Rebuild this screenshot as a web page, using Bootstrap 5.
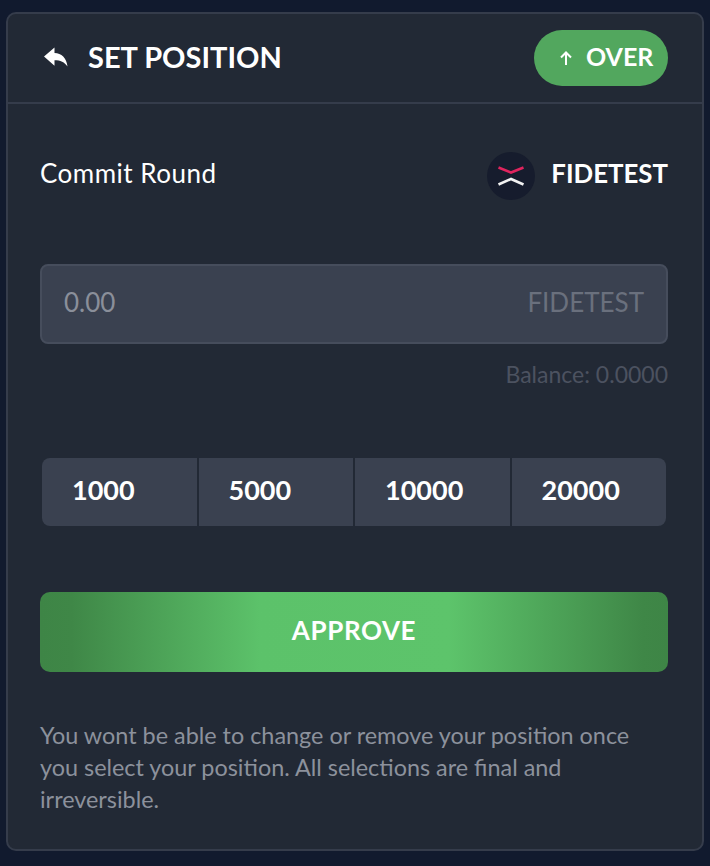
<!DOCTYPE html>
<html lang="en">
<head>
<meta charset="utf-8">
<title>Set Position</title>
<link rel="stylesheet" href="https://cdn.jsdelivr.net/npm/bootstrap@5.3.0/dist/css/bootstrap.min.css">
<style>
html,body{height:100%}
body{background:#111a2e;font-family:"Lato","Liberation Sans",sans-serif;color:#fff;padding:12px 6px 15px;overflow:hidden}
.pos-card{height:839px;width:698px;background:#222935;border:2px solid #353c4b;border-radius:10px;color:#fff}
.pos-head{height:90px;background:transparent;border-bottom:2px solid #353c4b;border-radius:0!important;padding:0 34px 0 36px}
.pos-title{font-size:29px;font-weight:700;line-height:1;margin:0;padding-bottom:3px}
.pos-back{width:24px;height:22px;margin-right:20px;margin-bottom:2px;flex:none}
.pos-pill{width:134px;height:56px;background:#52a75e;font-size:25px;font-weight:700;color:#fff;gap:13px;border:0;padding:0 0 0 25px}
.pos-pill span{padding-bottom:3px}
.pos-arrow{width:14px;height:14px}
.pos-body{padding:47px 34px 0 32px}
.pos-round{height:50px;font-size:26px;letter-spacing:.5px}
.pos-label{padding-bottom:5px}
.pos-coin{width:48px;height:48px;background:#161c2d;margin-right:16px}
.pos-token{font-size:25.8px;font-weight:700;letter-spacing:0;padding-bottom:5px}
.pos-input{margin-top:63px;height:80px;background:#3a4150;border:2px solid #464d5c;border-radius:8px}
.pos-input .form-control{background:transparent;border:0;box-shadow:none;color:#fff;font-size:26px;padding:0 0 4px 22px;height:76px;font-family:inherit}
.pos-input .form-control::placeholder{color:#8a8f9a;opacity:1}
.pos-input .input-group-text{background:transparent;border:0;color:#6a707d;font-size:26px;padding:0 22px 4px 0}
.pos-bal{margin-top:14px;height:32px;line-height:32px;font-size:23px;color:#4c5260;text-align:right}
.pos-amts{margin:68px 2px 0;height:68px;display:flex;background:#222935;border:0}
.pos-amts .btn{flex:1 1 0;background:#3a4150;border:0;border-radius:0;color:#fff;font-size:27px;font-weight:700;padding:0 0 4px 30px;margin-left:2px;text-align:left}
.pos-amts .btn:first-child{margin-left:0;border-radius:8px 0 0 8px}
.pos-amts .btn:last-child{border-radius:0 8px 8px 0}
.pos-approve{margin-top:66px;height:80px;width:100%;border:0;border-radius:10px;color:#fff;font-size:26px;font-weight:700;letter-spacing:.6px;padding:0 0 4px;background:linear-gradient(90deg,#3e8546 0%,#3f8747 5%,#5cc26a 35%,#5dc46b 65%,#3f8747 96%,#3e8546 100%)}
.pos-note{margin:47px 0 0;font-size:23.4px;line-height:32px;color:#8c919c}
</style>
</head>
<body>
<div class="card pos-card">
  <div class="card-header pos-head d-flex align-items-center justify-content-between">
    <div class="d-flex align-items-center">
      <svg class="pos-back" viewBox="0 0 24 22" aria-hidden="true"><path fill="#fff" d="M0 10.5 10.5 1.5v5.4C17.5 7.3 22.5 11.5 23.5 20.5 20.5 16 16.5 14.2 10.5 14.2v5.6z"/></svg>
      <h1 class="pos-title">SET POSITION</h1>
    </div>
    <button type="button" class="btn rounded-pill pos-pill d-flex align-items-center">
      <svg class="pos-arrow" viewBox="0 0 14 14" aria-hidden="true"><path fill="none" stroke="#fff" stroke-width="2" d="M7 14V2M2 6.5 7 1.5l5 5"/></svg>
      <span>OVER</span>
    </button>
  </div>
  <div class="card-body pos-body">
    <div class="d-flex align-items-center justify-content-between pos-round">
      <span class="pos-label">Commit Round</span>
      <div class="d-flex align-items-center">
        <span class="pos-coin rounded-circle d-flex align-items-center justify-content-center">
          <svg width="28" height="24" viewBox="0 0 28 24" aria-hidden="true"><path fill="none" stroke="#e0245e" stroke-width="2.6" d="M1.5 3.5 14 8.5 26.5 3.5"/><path fill="none" stroke="#f2f2f2" stroke-width="2.6" d="M1.5 20.5 14 15 26.5 20.5"/></svg>
        </span>
        <span class="pos-token">FIDETEST</span>
      </div>
    </div>
    <div class="input-group pos-input align-items-center">
      <input type="text" class="form-control" placeholder="0.00" aria-label="Amount">
      <span class="input-group-text">FIDETEST</span>
    </div>
    <div class="pos-bal">Balance: 0.0000</div>
    <div class="pos-amts">
      <button type="button" class="btn">1000</button>
      <button type="button" class="btn">5000</button>
      <button type="button" class="btn">10000</button>
      <button type="button" class="btn">20000</button>
    </div>
    <button type="button" class="btn pos-approve">APPROVE</button>
    <p class="pos-note">You wont be able to change or remove your position once you select your position. All selections are final and irreversible.</p>
  </div>
</div>
<script src="https://cdn.jsdelivr.net/npm/bootstrap@5.3.0/dist/js/bootstrap.bundle.min.js"></script>
</body>
</html>
